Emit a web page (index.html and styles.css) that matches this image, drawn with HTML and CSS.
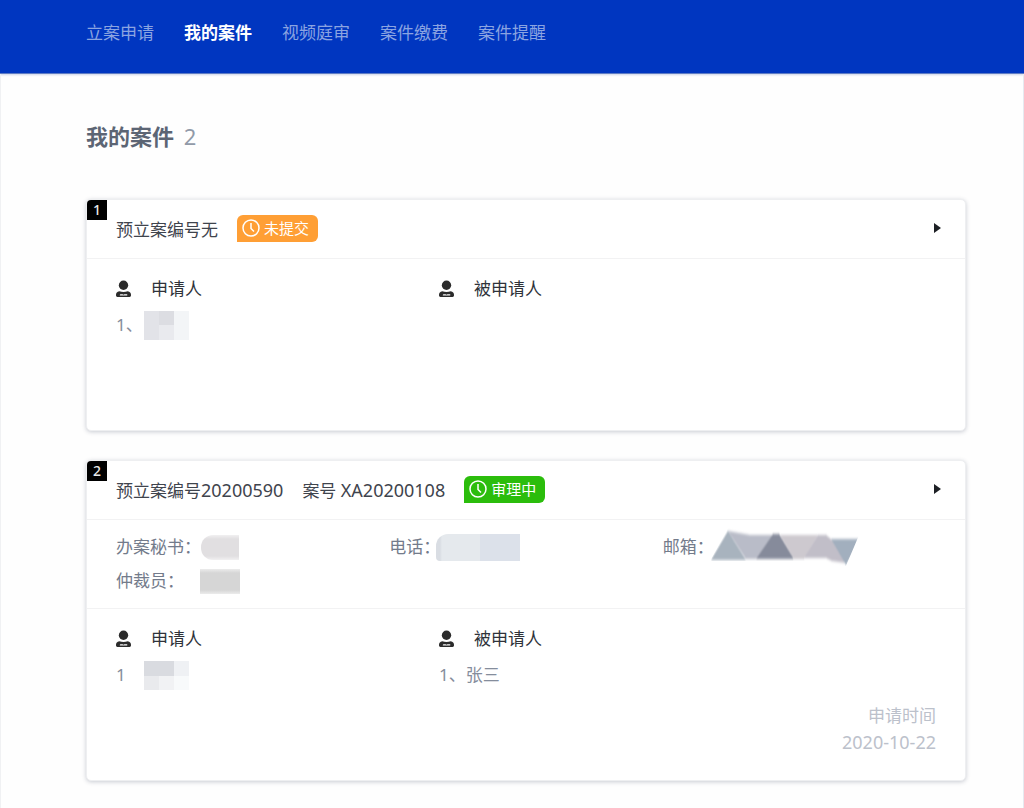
FILE: index.html
```html
<!DOCTYPE html>
<html lang="zh">
<head>
    <meta charset="UTF-8">
    <meta name="viewport" content="width=device-width, initial-scale=1.0">
    <title>我的案件</title>
    <link rel="stylesheet" href="styles.css">
</head>
<body>
    <svg class="defs" width="0" height="0">
        <symbol id="user" viewBox="0 0 16 18">
            <circle cx="8" cy="5" r="5"/>
            <path fill-rule="evenodd" d="M3.500 11.500Q8 13 12.500 11.500Q16 12.500 16 15V16Q16 17.500 14.500 17.500H1.500Q0 17.500 0 16V15Q0 12.500 3.500 11.500ZM4 16H12V14.500H9L8 15L7 14.500H5Q4 14.500 4 16Z"/>
        </symbol>
        <symbol id="clock" viewBox="0 0 18 18">
            <circle cx="9" cy="9" r="8" fill="none" stroke="currentColor" stroke-width="1.500"/>
            <path d="M9 4V9.500L12 12.500" fill="none" stroke="currentColor" stroke-width="1.500"/>
        </symbol>
    </svg>

    <header class="header">
        <nav class="nav">
            <a href="#">立案申请</a>
            <a href="#" class="active">我的案件</a>
            <a href="#">视频庭审</a>
            <a href="#">案件缴费</a>
            <a href="#">案件提醒</a>
        </nav>
    </header>

    <main class="main">
        <h1 class="title">我的案件 <span class="count">2</span></h1>

        <section class="card">
            <span class="index">1</span>
            <div class="card-head">
                <span>预立案编号无</span>
                <span class="tag tag-orange"><svg class="clock"><use href="#clock"/></svg>未提交</span>
                <button class="arrow" aria-label="展开"></button>
            </div>
            <div class="parties">
                <div>
                    <h2 class="party"><svg class="user"><use href="#user"/></svg>申请人</h2>
                    <p class="name"><span class="no">1、</span><span class="mosaic"></span></p>
                </div>
                <div>
                    <h2 class="party"><svg class="user"><use href="#user"/></svg>被申请人</h2>
                </div>
            </div>
        </section>

        <section class="card">
            <span class="index">2</span>
            <div class="card-head">
                <span>预立案编号<span class="num">20200590</span></span>
                <span>案号 <span class="num">XA20200108</span></span>
                <span class="tag tag-green"><svg class="clock"><use href="#clock"/></svg>审理中</span>
                <button class="arrow" aria-label="展开"></button>
            </div>
            <div class="info">
                <div><span class="label">办案秘书：</span><span class="mask mask-secretary"></span></div>
                <div><span class="label">电话：</span><span class="mask mask-phone"></span></div>
                <div><span class="label">邮箱：</span><svg class="mask-mail" viewBox="0 0 152 38">
                    <defs>
                        <filter id="soft" x="-5%" y="-20%" width="110%" height="140%"><feGaussianBlur stdDeviation="0 1.5"/></filter>
                        <clipPath id="edge"><path d="M18 0H152L136 38H120L100 33H0Z"/></clipPath>
                    </defs>
                    <g clip-path="url(#edge)" filter="url(#soft)">
                        <path d="M18 3L36 32H1Z" fill="#a8b3be"/>
                        <path d="M18 3L40 7H64L49 31H36Z" fill="#b9bcc8"/>
                        <path d="M63 6H69L84 31H46Z" fill="#868b9b"/>
                        <path d="M70 7H108L94 31H84Z" fill="#cdc9cf"/>
                        <path d="M108 7H116L122 12L136 35L122 33L116 30H94Z" fill="#c1bec8"/>
                        <path d="M121 11H150L136 37Z" fill="#a2afbe"/>
                    </g>
                </svg></div>
                <div><span class="label">仲裁员：</span><span class="mask mask-arbiter"></span></div>
            </div>
            <div class="parties">
                <div>
                    <h2 class="party"><svg class="user"><use href="#user"/></svg>申请人</h2>
                    <p class="name"><span class="no">1</span><span class="mosaic mosaic-top"></span></p>
                </div>
                <div>
                    <h2 class="party"><svg class="user"><use href="#user"/></svg>被申请人</h2>
                    <p class="name">1、张三</p>
                </div>
                <div class="date">申请时间<br><span class="num">2020-10-22</span></div>
            </div>
        </section>
    </main>
</body>
</html>
```
FILE: styles.css
```css
* {
    box-sizing: border-box;
}
body {
    margin: 0;
    background: #fefefe;
    color: #3f444d;
    font-family: "Noto Sans", "Noto Sans CJK SC", sans-serif;
    font-size: 17px;
}
.defs {
    position: absolute;
}
.header {
    background: #0036c0;
    padding: 0 58px 0 86px;
    border-bottom: 1px solid #5f7cc4;
    box-shadow: 0 1px 2px rgba(0, 40, 140, 0.2);
}
.nav {
    display: flex;
    gap: 30px;
    height: 73px;
    padding-top: 16px;
    line-height: 34px;
}
.nav a {
    color: #8ba4e1;
    text-decoration: none;
}
.nav a.active {
    color: #fff;
    font-weight: bold;
}
.main {
    padding: 42px 57px 27px 85px;
    border-left: 1px solid #f0f1f3;
    border-right: 1px solid #e6eaf0;
}
.title {
    margin: 0 0 43px;
    font-size: 22px;
    line-height: 40px;
    color: #5c6574;
}
.count {
    margin-left: 4px;
    font-weight: normal;
    color: #919aa8;
}
.card {
    position: relative;
    margin-bottom: 29px;
    background: #fff;
    border: 1px solid #eeeff1;
    border-radius: 5px;
    box-shadow: 0 1px 4px rgba(40, 50, 80, 0.25);
}
.card:last-child {
    margin-bottom: 0;
}
.index {
    position: absolute;
    top: 0;
    left: 0;
    width: 20px;
    height: 20px;
    border-radius: 4px 0 0 0;
    background: #000;
    color: #e8e8e8;
    font-size: 14px;
    font-weight: 500;
    line-height: 20px;
    text-align: center;
}
.card-head {
    display: flex;
    align-items: center;
    gap: 19px;
    height: 59px;
    padding: 0 24px 2px 29px;
    border-bottom: 1px solid #f2f2f3;
}
.num {
    font-size: 18px;
}
.tag {
    display: flex;
    align-items: center;
    gap: 4px;
    height: 27px;
    padding: 0 9px 0 5px;
    border-radius: 6px 6px 6px 0;
    color: #fff;
    font-size: 15px;
    line-height: 27px;
}
.tag-orange {
    background: #ff9f35;
}
.tag-green {
    background: #2bbd0c;
}
.clock {
    width: 18px;
    height: 18px;
}
.arrow {
    margin-left: auto;
    width: 7px;
    height: 10px;
    padding: 0;
    border: 0;
    background: #1d2025;
    clip-path: polygon(0 0, 100% 50%, 0 100%);
    cursor: pointer;
}
.info {
    display: grid;
    grid-template-columns: repeat(3, 1fr);
    padding: 10px 29px;
    border-bottom: 1px solid #f2f2f3;
    color: #737b8b;
    line-height: 34px;
}
.info > div {
    display: flex;
    align-items: center;
    height: 34px;
}
.label {
    margin-right: -4px;
}
.mask {
    height: 25px;
}
.mask-secretary {
    width: 38px;
    margin-left: 4px;
    border-radius: 12px 0 0 12px;
    background: linear-gradient(#f1f0f1, #e1dfe1 4px 21px, #f1f0f1);
}
.mask-phone {
    width: 84px;
    height: 27px;
    border-radius: 12px 0 0 4px;
    background: linear-gradient(to right, #d9dde3 4px, #e5e9ed 6px 44px, #dce1ea 44px);
}
.mask-arbiter {
    width: 40px;
    margin-left: 20px;
    background: linear-gradient(#ececec, #d6d6d6 4px 21px, #ececec);
}
.mask-mail {
    width: 152px;
    height: 38px;
}
.parties {
    display: grid;
    grid-template-columns: 13fr 13fr 7fr;
    min-height: 171px;
    padding: 12px 29px 24px;
}
.party {
    display: flex;
    align-items: center;
    gap: 20px;
    margin: 0;
    font-size: 17px;
    font-weight: normal;
    line-height: 36px;
    color: #2f333a;
}
.user {
    width: 15px;
    height: 18px;
    fill: #2b2b2b;
}
.name {
    display: flex;
    align-items: center;
    height: 36px;
    margin: 0;
    color: #858d9c;
    line-height: 36px;
}
.no {
    width: 28px;
}
.mosaic {
    width: 45px;
    height: 29px;
    background:
        linear-gradient(#dcdde2, #dcdde2) 15px 0 / 15px 14px no-repeat,
        linear-gradient(to right, #e2e3e8 15px, #e9eaee 15px 30px, #f3f5f7 30px);
}
.mosaic-top {
    background:
        linear-gradient(to right, #d9dbe0 30px, #eff1f4 30px) 0 0 / 45px 15px no-repeat,
        linear-gradient(to right, #e9eaed 15px, #f1f2f4 15px 30px, #f8fafb 30px);
}
.date {
    align-self: end;
    color: #bcc1cb;
    line-height: 27px;
    text-align: right;
}
```
